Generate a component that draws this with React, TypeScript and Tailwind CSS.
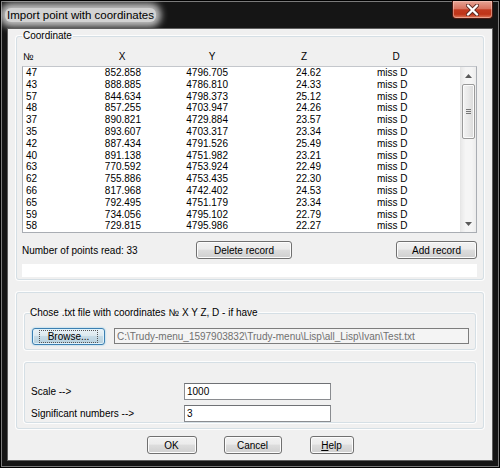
import React from "react";

type Row = [string, string, string, string];

const rows: Row[] = [
  ["47", "852.858", "4796.705", "24.62"],
  ["43", "888.885", "4786.810", "24.33"],
  ["57", "844.634", "4798.373", "25.12"],
  ["48", "857.255", "4703.947", "24.26"],
  ["37", "890.821", "4729.884", "23.57"],
  ["35", "893.607", "4703.317", "23.34"],
  ["42", "887.434", "4791.526", "25.49"],
  ["40", "891.138", "4751.982", "23.21"],
  ["63", "770.592", "4753.924", "22.49"],
  ["62", "755.886", "4753.435", "22.30"],
  ["66", "817.968", "4742.402", "24.53"],
  ["65", "792.495", "4751.179", "23.34"],
  ["59", "734.056", "4795.102", "22.79"],
  ["58", "729.815", "4795.986", "22.27"],
];

const btn =
  "h-[18px] rounded-[3px] border border-[#707070] bg-[linear-gradient(#f2f2f2_0%,#ebebeb_45%,#dddddd_50%,#cfcfcf_100%)] shadow-[inset_0_0_0_1px_#fcfcfc] text-[10px] text-black flex items-center justify-center";

const field =
  "h-[17px] border border-[#8a8c90] border-t-[#6f7175] bg-white text-[10px] text-black px-[2px] flex items-center";

const group = "border border-[#d5dfe5] rounded-[3px] shadow-[0_0_0_1px_#fdfdfd]";

const Scrollbar = () => (
  <div className="w-[16px] h-full bg-[linear-gradient(90deg,#e9e9e9,#f5f5f5_30%,#f5f5f5_70%,#ececec)] border-l border-[#e6e6e6] flex flex-col items-center">
    <div className="h-[17px] w-full flex items-center justify-center">
      <svg width="7" height="4" viewBox="0 0 7 4">
        <path d="M3.5 0L7 4H0z" fill="#5a5a5a" />
      </svg>
    </div>
    <div className="w-[13px] h-[55px] rounded-[2px] border border-[#9a9a9a] bg-[linear-gradient(90deg,#f4f4f4,#e8e8e8_50%,#d9d9d9)] shadow-[inset_0_0_0_1px_#fbfbfb] flex flex-col items-center justify-center gap-[1px]">
      <div className="w-[5px] h-[1px] bg-[#777]" />
      <div className="w-[5px] h-[1px] bg-[#777]" />
      <div className="w-[5px] h-[1px] bg-[#777]" />
    </div>
    <div className="flex-1" />
    <div className="h-[17px] w-full flex items-center justify-center">
      <svg width="7" height="4" viewBox="0 0 7 4">
        <path d="M0 0H7L3.5 4z" fill="#5a5a5a" />
      </svg>
    </div>
  </div>
);

export default function App() {
  return (
    <div className="w-[500px] h-[468px] bg-[#151515] border border-black shadow-[inset_0_0_0_1px_#7a7a7a] flex flex-col font-['Liberation_Sans',Arial,sans-serif] text-black overflow-hidden">
      {/* title bar */}
      <div className="h-[27px] flex items-start justify-between pl-[6px] pr-[6px]">
        <div className="mt-[7px] -ml-[2px] px-[2px] h-[14px] flex items-center rounded-[6px] bg-[#d2d2d2] shadow-[0_0_7px_5px_rgba(210,210,210,0.9)]">
          <span className="text-[11.5px] leading-[14px] text-black">Import point with coordinates</span>
        </div>
        <div className="w-[41px] h-[18px] rounded-b-[4px] border border-[#4a1a12] border-t-0 bg-[linear-gradient(#e6a495_0%,#d8735f_45%,#c13a20_52%,#be3418_78%,#e07a5c_100%)] shadow-[inset_0_0_0_1px_rgba(255,220,210,0.45)] flex items-center justify-center">
          <svg width="13" height="12" viewBox="0 0 13 12">
            <path d="M2 1.5L11 10.5M11 1.5L2 10.5" stroke="#5b2a22" strokeWidth="4" strokeLinecap="round" />
            <path d="M2 1.5L11 10.5M11 1.5L2 10.5" stroke="#ffffff" strokeWidth="2.4" strokeLinecap="round" />
          </svg>
        </div>
      </div>

      {/* client area */}
      <div className="flex-1 mx-[6px] mb-[6px] bg-[#f0f0f0] border border-[#5e5e5e] flex flex-col text-[10px]">
        {/* Coordinate group */}
        <fieldset className={`${group} mt-[1px] mx-[8px] pl-[5px] pr-[6px] pb-[2px]`}>
          <legend className="px-[1px] text-[10px] leading-[12px]">Coordinate</legend>
          <div className="mt-[4px] h-[20px] grid grid-cols-[60px_80px_100px_84px_100px] items-center">
            <div className="pl-[1px]">№</div>
            <div className="text-center">X</div>
            <div className="text-center">Y</div>
            <div className="text-center">Z</div>
            <div className="text-center">D</div>
          </div>
          <div className="h-[167px] border border-[#a9adb3] border-t-[#c4c7cc] bg-white flex">
            <div className="flex-1 flex flex-col">
              {rows.map((r) => (
                <div
                  key={r[0]}
                  className="h-[11.8px] leading-[11.8px] grid grid-cols-[37px_81px_87px_93px_1fr]"
                >
                  <div className="pl-[3px]">{r[0]}</div>
                  <div className="text-right">{r[1]}</div>
                  <div className="text-right">{r[2]}</div>
                  <div className="text-right">{r[3]}</div>
                  <div className="pl-[56px]">miss D</div>
                </div>
              ))}
            </div>
            <Scrollbar />
          </div>
          <div className="mt-[8px] h-[18px] flex items-center">
            <div className="w-[174px]">Number of points read: 33</div>
            <button className={`${btn} w-[96px]`}>Delete record</button>
            <button className={`${btn} w-[81px] ml-auto`}>Add record</button>
          </div>
          <div className="mt-[5px] h-[13px] bg-white" />
        </fieldset>

        {/* file + settings group */}
        <div className={`${group} mt-[12px] mx-[8px] px-[7px] pt-[14px] pb-[5px]`}>
          <fieldset className={`${group} pl-[5px] pr-[6px] pb-[4px]`}>
            <legend className="px-0 text-[10px] leading-[12px]">
              Chose .txt file with coordinates № X Y Z, D - if have
            </legend>
            <div className="mt-[8px] h-[18px] flex items-center">
              <button className="ml-[2px] w-[73px] h-[17px] rounded-[3px] border border-[#3c7fb1] bg-[linear-gradient(#eaf3f7_0%,#dce9ef_45%,#c6dbe6_50%,#b7d0dd_100%)] shadow-[inset_0_0_0_1px_#dff2fb,0_0_2px_#7fc4e6] text-[10px] flex items-center justify-center">
                <span className="px-[8px] leading-[11px] outline-1 outline-dotted outline-[#555] -outline-offset-0">
                  Browse...
                </span>
              </button>
              <div className="ml-[9px] w-[355px] h-[16px] border border-[#7d7d7d] bg-[#f4f4f4] text-[#707070] px-[2px] flex items-center whitespace-nowrap overflow-hidden">
                C:\Trudy-menu_1597903832\Trudy-menu\Lisp\all_Lisp\Ivan\Test.txt
              </div>
            </div>
          </fieldset>

          <div className={`${group} mt-[12px] pl-[6px] pt-[20px] flex flex-col gap-[5px]`}>
            <div className="h-[17px] flex items-center">
              <div className="w-[153px]">Scale --&gt;</div>
              <div className={`${field} w-[147px]`}>1000</div>
            </div>
            <div className="h-[17px] flex items-center">
              <div className="w-[153px]">Significant numbers --&gt;</div>
              <div className={`${field} w-[147px]`}>3</div>
            </div>
          </div>
        </div>

        {/* dialog buttons */}
        <div className="mt-[7px] flex justify-center gap-[27px]">
          <button className={`${btn} w-[50px]`}>OK</button>
          <button className={`${btn} w-[58px]`}>Cancel</button>
          <button className={`${btn} w-[44px] ml-[1px]`}>
            <span className="underline">H</span>elp
          </button>
        </div>
      </div>
    </div>
  );
}
